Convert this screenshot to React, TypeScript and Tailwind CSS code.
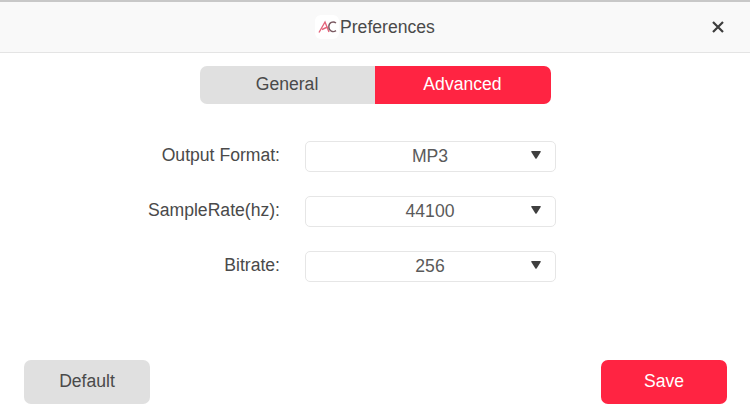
const font = { fontFamily: '"Liberation Sans", Arial, sans-serif' };

const settings = [
  { label: "Output Format:", value: "MP3" },
  { label: "SampleRate(hz):", value: "44100" },
  { label: "Bitrate:", value: "256" },
];

const Logo = () => (
  <span className="flex h-[24px] w-[24px] items-center justify-center rounded-[6px] bg-white">
    <svg width="19" height="14" viewBox="0 0 19 14" fill="none">
      <path d="M1 12.5 L7 2 L11 12" stroke="#e4647b" strokeWidth="1.4" />
      <path d="M4 9.5 L9.5 7" stroke="#e4647b" strokeWidth="1.4" />
      <path d="M18 3 C15 0.8 10.8 2.5 10.8 6.8 C10.8 11 15 12.8 18 10.6" stroke="#7a5a62" strokeWidth="1.4" />
    </svg>
  </span>
);

const SettingRow = ({ label, value }: { label: string; value: string }) => (
  <div className="flex items-center">
    <div className="w-[280px] pb-[2px] text-right text-[17.6px] text-[#4a4a4a]">{label}</div>
    <div className="relative ml-[25px] flex h-[31px] w-[251px] items-center justify-center rounded-[5px] border border-[#e6e6e6] pr-[1px] text-[17.6px] text-[#5a5a5a]">
      {value}
      <svg className="absolute left-[225px] top-[9px]" width="10" height="8" viewBox="0 0 10 8">
        <path d="M0.8 0 H9.2 Q10.2 0 9.7 1 L5.6 7.4 Q5 8 4.4 7.4 L0.3 1 Q-0.2 0 0.8 0 Z" fill="#3f3f3f" />
      </svg>
    </div>
  </div>
);

export default function App() {
  return (
    <div className="flex h-[412px] w-[750px] flex-col overflow-hidden bg-white" style={font}>
      <header className="flex h-[53px] shrink-0 items-center border-t-2 border-b border-t-[#c8c8c8] border-b-[#e4e4e4] bg-[#f9f9f9] pl-[315px] pr-[25px]">
        <Logo />
        <span className="ml-[1px] text-[17.6px] text-[#4a4a4a]">Preferences</span>
        <svg className="ml-auto" width="14" height="14" viewBox="0 0 14 14">
          <path d="M2 2 L12 12 M12 2 L2 12" stroke="#3d3d3d" strokeWidth="2.2" />
        </svg>
      </header>

      <div className="mt-[13px] flex justify-center">
        <div className="flex h-[38px] w-[351px] overflow-hidden rounded-[7px] text-[17.6px]">
          <div className="flex w-[175px] items-center justify-center bg-[#e0e0e0] pb-[2px] text-[#4a4a4a]">General</div>
          <div className="flex flex-1 items-center justify-center bg-[#ff2442] pb-[2px] text-white">Advanced</div>
        </div>
      </div>

      <div className="mt-[37px] flex flex-col gap-[24px]">
        {settings.map((s) => (
          <SettingRow key={s.label} label={s.label} value={s.value} />
        ))}
      </div>

      <footer className="mt-auto mb-[8px] flex justify-between pl-[24px] pr-[23px] text-[17.6px]">
        <button className="h-[44px] w-[126px] rounded-[7px] bg-[#e0e0e0] pb-[2px] text-[#4a4a4a]">Default</button>
        <button className="h-[44px] w-[126px] rounded-[7px] bg-[#ff2442] pb-[2px] text-white">Save</button>
      </footer>
    </div>
  );
}
